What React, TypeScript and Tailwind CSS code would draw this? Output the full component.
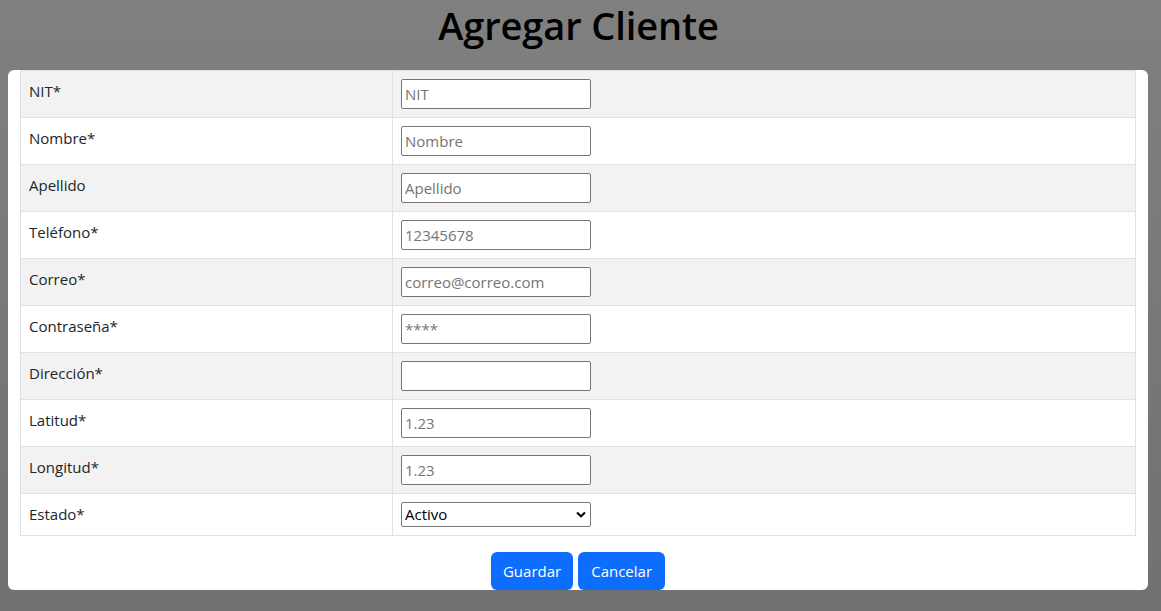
import React, { useState } from 'react';

const fields = [
    { label: 'NIT*', placeholder: 'NIT' },
    { label: 'Nombre*', placeholder: 'Nombre' },
    { label: 'Apellido', placeholder: 'Apellido' },
    { label: 'Teléfono*', placeholder: '12345678' },
    { label: 'Correo*', placeholder: 'correo@correo.com' },
    { label: 'Contraseña*', placeholder: '****' },
    { label: 'Dirección*', placeholder: '' },
    { label: 'Latitud*', placeholder: '1.23' },
    { label: 'Longitud*', placeholder: '1.23' },
];

export default function App() {
    const [estado, setEstado] = useState('Activo');

    return (
        <div
            className="min-h-[611px] w-[1161px] bg-gradient-to-b from-[#808080] to-[#717171] text-[#212529]"
            style={{ fontFamily: '"Open Sans", "Noto Sans", sans-serif' }}
        >
            <div className="h-[70px] flex items-center justify-center">
                <h1 className="text-[38px] font-semibold text-black leading-none -mt-[20px] tracking-[-0.1px] -translate-x-[2px]">Agregar Cliente</h1>
            </div>

            <div className="ml-[8px] w-[1140px] bg-white rounded-md px-[12px]">
                <table className="w-[1116px] border-collapse text-[15px]">
                    <tbody>
                        {fields.map((f, i) => (
                            <tr key={f.label} className={i % 2 === 0 ? 'bg-[#f2f2f2]' : 'bg-white'}>
                                <td className={`w-[372px] border border-[#dee2e6] px-[8px] py-[8px] align-top leading-[24px] ${i === 0 ? '' : 'border-t-0'}`}>
                                    {f.label}
                                </td>
                                <td className={`border border-[#dee2e6] px-[8px] py-[8px] align-top ${i === 0 ? '' : 'border-t-0'}`}>
                                    <input
                                        type="text"
                                        placeholder={f.placeholder}
                                        className="block w-[190px] h-[30px] bg-white border border-[#767676] rounded-[2px] px-[3px] text-[15px] placeholder:text-[#757575] outline-none"
                                    />
                                </td>
                            </tr>
                        ))}
                        <tr className="bg-white">
                            <td className="border border-[#dee2e6] border-t-0 px-[8px] py-[8px] align-top leading-[24px]">
                                Estado*
                            </td>
                            <td className="border border-[#dee2e6] border-t-0 px-[8px] py-[8px] align-top">
                                <div className="relative w-[190px] h-[25px]">
                                    <select
                                        value={estado}
                                        onChange={(e) => setEstado(e.target.value)}
                                        className="appearance-none block w-full h-full bg-white border border-[#767676] rounded-[2px] pl-[3px] text-[15px] text-black outline-none"
                                    >
                                        <option>Activo</option>
                                        <option>Inactivo</option>
                                    </select>
                                    <svg className="absolute right-[5px] top-[9px] pointer-events-none" width="10" height="7" viewBox="0 0 10 7">
                                        <path d="M1 1.5 L5 5.3 L9 1.5" fill="none" stroke="#000" strokeWidth="2" />
                                    </svg>
                                </div>
                            </td>
                        </tr>
                    </tbody>
                </table>

                <div className="flex justify-center gap-[5px] mt-[16px]">
                    <button className="h-[38px] px-[12px] rounded-md bg-[#0d6efd] text-white text-[15px]">Guardar</button>
                    <button className="h-[38px] px-[13px] rounded-md bg-[#0d6efd] text-white text-[15px]">Cancelar</button>
                </div>
            </div>
        </div>
    );
}
